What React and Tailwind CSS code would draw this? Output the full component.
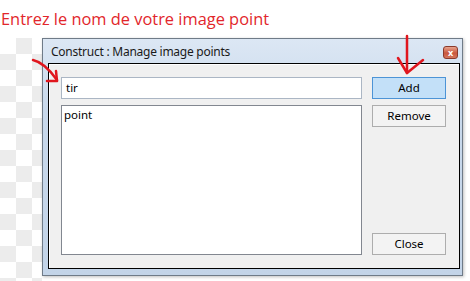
export default function App() {
  return (
    <div className="relative w-[470px] h-[281px] overflow-hidden bg-white font-['Noto_Sans',sans-serif] text-[11.5px] text-black">
      <div className="h-[38px] flex items-start">
        <div className="mt-[7px] ml-[1px] bg-white pr-[4px] text-[16.4px] leading-[24px] text-[#e2262b] font-['Open_Sans',sans-serif]">
          Entrez le nom de votre image point
        </div>
      </div>

      <div className="flex">
        <div className="w-[42px] h-[243px] bg-[conic-gradient(#ececec_25%,#ffffff_0_50%,#ececec_0_75%,#ffffff_0)] bg-size-[32px_32px]" />

        <div className="w-[421px] h-[238px] flex flex-col border border-[#6f7b88] bg-[linear-gradient(180deg,#dce7f4,#c9d9ec_30%,#c3d4e8)] shadow-[1px_1px_3px_rgba(0,0,0,0.25)]">
          <div className="h-[24px] flex items-center pl-[8px] pr-[4px]">
            <span className="flex-1 pt-[2px] text-[12px] tracking-[-0.25px] text-[#1a1a1a]">Construct : Manage image points</span>
            <div className="w-[15px] h-[13px] mt-[3px] rounded-[3px] border border-[#8a3a2c] bg-[linear-gradient(180deg,#e8a48e,#c9573d_55%,#d4765c)] flex items-center justify-center text-white text-[9px] font-bold leading-none">
              x
            </div>
          </div>

          <div className="flex-1 mx-[5px] mb-[6px] mr-[2px] border border-black bg-[#f0f0f0] shadow-[inset_1px_1px_0_#ffffff] flex gap-[10px] pl-[12px] pr-[13px] pt-[13px] pb-[13px]">
            <div className="w-[301px] flex flex-col gap-[6px]">
              <div className="h-[22px] border border-[#abb6c4] bg-white flex items-center pl-[4px]">tir</div>
              <div className="flex-1 border border-[#828790] bg-white pl-[2px]">point</div>
            </div>

            <div className="w-[74px] flex flex-col gap-[6px]">
              <div className="h-[22px] border border-[#4d94d6] bg-[#c3e0f8] flex items-center justify-center">Add</div>
              <div className="h-[22px] border border-[#adadad] bg-[#f3f3f3] flex items-center justify-center">Remove</div>
              <div className="flex-1" />
              <div className="h-[22px] border border-[#adadad] bg-[#f3f3f3] flex items-center justify-center">Close</div>
            </div>
          </div>
        </div>
      </div>

      <svg className="absolute left-0 top-0" width="470" height="281" fill="none" stroke="#e0161e" strokeWidth="2.5" strokeLinecap="round" strokeLinejoin="round">
        <path d="M33 60 C42 62 50 70 57 80" />
        <path d="M56 71 L57 81 L47 81" />
        <path d="M407 36 L407 73" />
        <path d="M398 58 L407 73 L423 60" />
      </svg>
    </div>
  );
}
